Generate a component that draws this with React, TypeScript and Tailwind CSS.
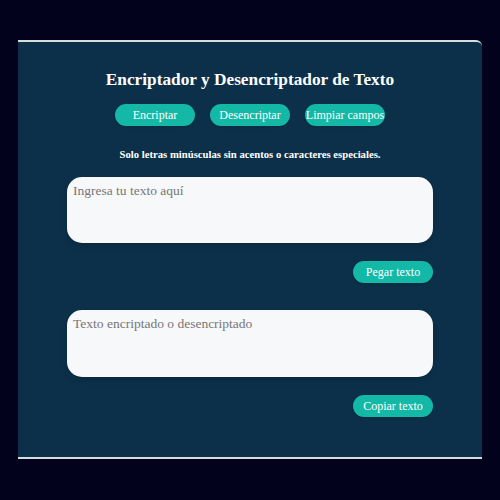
import React from 'react';

const btn =
  'w-20 h-[22px] rounded-full bg-[#14b8a6] text-white text-[12px] leading-none flex items-center justify-center shadow-sm';

const area =
  'w-full rounded-[15px] bg-[#f6f8fa] px-[6px] pt-[4px] text-[13.5px] text-gray-700 placeholder:text-[#767676] resize-none outline-none shadow-md';

export default function App() {
  return (
    <div
      className="w-[500px] h-[500px] bg-[#03021d] pt-10"
      style={{ fontFamily: '"Liberation Serif", "Times New Roman", serif' }}
    >
      <div className="mx-[18px] h-[419px] bg-[#0c304a] border-t-2 border-b-2 border-[#d6dedd] rounded-tr-md flex flex-col items-center">
        {/* Header */}
        <h1 className="mt-[26px] text-[17.3px] font-bold text-white leading-6">
          Encriptador y Desencriptador de Texto
        </h1>
        <div className="mt-[12px] flex gap-[15px]">
          <button className={btn}>Encriptar</button>
          <button className={btn}>Desencriptar</button>
          <button className={btn}>Limpiar campos</button>
        </div>
        <p className="mt-[20px] text-[10.7px] font-bold text-white leading-4">
          Solo letras minúsculas sin acentos o caracteres especiales.
        </p>

        {/* Input */}
        <div className="mt-[15px] w-[366px] flex flex-col items-end">
          <textarea className={`${area} h-[66px]`} placeholder="Ingresa tu texto aquí" />
          <button className={`${btn} mt-[18px]`}>Pegar texto</button>
        </div>

        {/* Output */}
        <div className="mt-[27px] w-[366px] flex flex-col items-end">
          <textarea className={`${area} h-[67px]`} placeholder="Texto encriptado o desencriptado" />
          <button className={`${btn} mt-[18px]`}>Copiar texto</button>
        </div>
      </div>
    </div>
  );
}
